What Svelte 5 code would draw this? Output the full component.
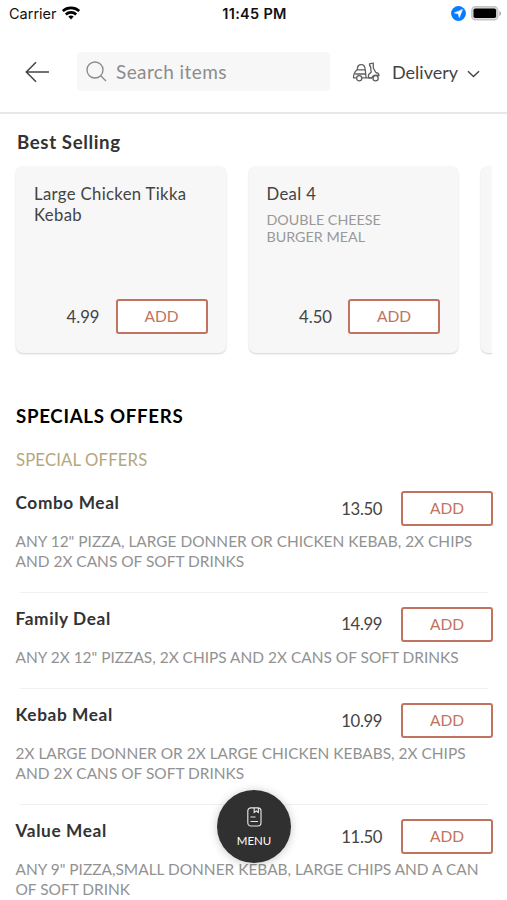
<script>
  const best = [
    { name: ['Large Chicken Tikka', 'Kebab'], desc: [], price: '4.99' },
    { name: ['Deal 4'], desc: ['DOUBLE CHEESE', 'BURGER MEAL'], price: '4.50' },
  ];
  const offers = [
    { name: 'Combo Meal', price: '13.50', desc: ['ANY 12" PIZZA, LARGE DONNER OR CHICKEN KEBAB, 2X CHIPS', 'AND 2X CANS OF SOFT DRINKS'] },
    { name: 'Family Deal', price: '14.99', desc: ['ANY 2X 12" PIZZAS, 2X CHIPS AND 2X CANS OF SOFT DRINKS'] },
    { name: 'Kebab Meal', price: '10.99', desc: ['2X LARGE DONNER OR 2X LARGE CHICKEN KEBABS, 2X CHIPS', 'AND 2X CANS OF SOFT DRINKS'] },
    { name: 'Value Meal', price: '11.50', desc: ['ANY 9" PIZZA,SMALL DONNER KEBAB, LARGE CHIPS AND A CAN', 'OF SOFT DRINK'] },
  ];
</script>

<div class="screen">
  <div class="status">
    <div class="carrier">
      <span>Carrier</span>
      <svg width="18" height="14" viewBox="0 0 18 14" fill="none" stroke="#000" stroke-width="2.6">
        <path d="M.8 5.100C5.300.8 12.700.8 17.200 5.100" />
        <path d="M3.800 8.500C6.600 5.700 11.400 5.700 14.200 8.500" />
        <path d="M6.300 10.600C7.800 9.100 10.200 9.100 11.700 10.600L9 13.400Z" fill="#000" stroke="none" />
      </svg>
    </div>
    <div class="time">11:45 PM</div>
    <div class="power">
      <svg width="15" height="15" viewBox="0 0 15 15"><circle cx="7.500" cy="7.500" r="7.400" fill="#087cff" /><path d="M11.500 3.500 8.300 11.600 7.300 7.800 3.400 6.900Z" fill="#fff" stroke="#fff" stroke-width=".6" stroke-linejoin="round" /></svg>
      <svg width="31" height="15" viewBox="0 0 31 15"><rect x=".8" y=".8" width="26" height="13" rx="3.600" fill="#dcdcdc" stroke="#c4c4c4" stroke-width="1.400" /><rect x="2.500" y="2.500" width="22.600" height="9.600" rx="1.800" /><path d="M28.300 5v5c1.200-.5 1.800-1.400 1.800-2.500S29.500 5.500 28.300 5Z" fill="#aaa" /></svg>
    </div>
  </div>

  <header>
    <svg class="back" width="25" height="22" viewBox="0 0 25 22" fill="none" stroke="#444" stroke-width="1.500"><path d="M24 11H1.300M11 1.200 1.300 11 11 20.800" /></svg>
    <div class="search">
      <svg width="21" height="21" viewBox="0 0 21 21" fill="none" stroke="#8b8b8b" stroke-width="1.350"><circle cx="9" cy="9" r="8" /><path d="m14.700 14.700 5.300 5.300" /></svg>
      <span>Search items</span>
    </div>
    <div class="delivery">
      <svg width="28" height="20" viewBox="0 0 28 20" fill="none" stroke="#606060" stroke-width="1.300" stroke-linejoin="round">
        <path d="M5.300 7.800C5.300 4 6.700 2.600 9.200 2.600S13.100 4 13.100 7.800ZM5 7.800C2.800 9.800 1.500 12.500 1.500 15.800H4.500M13.300 7.800 14 15.800M3.200 12H13.800M9.900 15.800H20" />
        <circle cx="7.200" cy="16.300" r="2.600" /><circle cx="23.600" cy="16.300" r="2.600" />
        <path d="M17.800 4.200 17.500 1.800 21.300 1.100V6L23.700 10.300c2.100.3 3.300 1.500 3.300 3.400-3.300-1.200-6.500-.4-7 2.100H16.500V12.800L19.200 10 18.500 4.200Z" />
      </svg>
      <span>Delivery</span>
      <svg class="chev" width="13" height="8" viewBox="0 0 13 8" fill="none" stroke="#444" stroke-width="1.400"><path d="m1 1.200 5.500 5.300L12 1.200" /></svg>
    </div>
  </header>

  <h2 class="best-title">Best Selling</h2>
  <div class="cards">
    {#each best as item}
      <article class="card">
        <div class="card-name">{#each item.name as line}<div>{line}</div>{/each}</div>
        <div class="card-desc">{#each item.desc as line}<div>{line}</div>{/each}</div>
        <div class="buy"><span class="price">{item.price}</span><button>ADD</button></div>
      </article>
    {/each}
    <article class="card"></article>
  </div>

  <h1>SPECIALS OFFERS</h1>
  <h3>SPECIAL OFFERS</h3>
  <div class="list">
    {#each offers as item}
      <article class="item">
        <div class="row">
          <h4>{item.name}</h4>
          <span class="price">{item.price}</span>
          <button>ADD</button>
        </div>
        <div class="desc">{#each item.desc as line}<div>{line}</div>{/each}</div>
      </article>
    {/each}
  </div>

  <div class="menu">
    <svg width="15" height="20" viewBox="0 0 15 20" fill="none" stroke="#e6e6e6" stroke-width="1.150"><rect x=".8" y=".8" width="13.200" height="18.200" rx="3.200" /><path d="M7.200 1v4.500L9.300 4l2.100 1.500V1M3.500 10h5M3.500 14.500h7.500" /></svg>
    <span>MENU</span>
  </div>
</div>

<style>
  :global(body) { background: #fff; }
  .screen {
    position: relative;
    width: 507px;
    height: 900px;
    overflow: hidden;
    background: #fff;
    color: #333;
    font-family: Lato, sans-serif;
    white-space: nowrap;
    display: flex;
    flex-direction: column;
  }
  h1, h2, h3, h4 { margin: 0; }
  svg { display: block; flex: none; }
  .status {
    flex: none;
    height: 28px;
    box-sizing: border-box;
    padding: 0 5px 0 9px;
    display: grid;
    grid-template-columns: 1fr auto 1fr;
    align-items: center;
    font: 14.500px/28px Inter, sans-serif;
    color: #111;
  }
  .carrier { display: flex; align-items: center; gap: 5px; }
  .carrier svg { margin-top: -2px; }
  .time { font-weight: 600; letter-spacing: .3px; margin-left: -2px; }
  .power { display: flex; justify-content: flex-end; align-items: center; gap: 5px; margin-top: -1px; }
  header {
    flex: none;
    height: 86px;
    box-sizing: border-box;
    border-bottom: 2px solid #e7e7e7;
    padding: 24px 27px 0 25px;
    display: flex;
    align-items: flex-start;
  }
  .back { margin-top: 9px; }
  .search {
    margin-left: 27px;
    width: 254px;
    height: 39px;
    box-sizing: border-box;
    border-radius: 4px;
    background: #f7f7f7;
    display: flex;
    align-items: center;
    padding-left: 9px;
    gap: 9px;
    font-size: 19px;
    letter-spacing: .4px;
    color: #8c8c8c;
  }
  .delivery {
    margin-left: 22px;
    height: 39px;
    display: flex;
    align-items: center;
    font-size: 18px;
    color: #444;
  }
  .delivery span { margin-left: 12px; width: 75px; }
  .chev { margin-top: 4px; }
  .best-title { margin: 15px 0 0 17px; font-size: 18.700px; line-height: 26px; height: 26px; font-weight: 700; letter-spacing: .6px; }
  .cards {
    flex: none;
    margin: 10px 15px 0 14px;
    padding: 1px 0 5px 2px;
    display: flex;
    gap: 23px;
    overflow: hidden;
  }
  .card {
    flex: none;
    width: 209.500px;
    height: 187px;
    box-sizing: border-box;
    border-radius: 7px;
    background: #f7f7f7;
    box-shadow: 0 1px 2px rgba(0, 0, 0, .18);
    padding: 18px 18px 19px;
    display: flex;
    flex-direction: column;
  }
  .card-name { font-size: 16.700px; line-height: 20.500px; letter-spacing: .35px; color: #444; }
  .card-desc { margin-top: 6px; font-size: 14.300px; line-height: 17.700px; color: #999; }
  .buy { margin-top: auto; display: flex; justify-content: flex-end; align-items: center; gap: 16px; }
  .price { font-size: 16.700px; color: #444; }
  button {
    width: 92px;
    height: 35px;
    box-sizing: border-box;
    border: 2px solid #c0735f;
    border-radius: 3px;
    background: #fff;
    padding: 0 0 1px;
    font: 15.500px Lato, sans-serif;
    color: #c0735f;
  }
  h1 { margin: 45px 0 0 16px; font-size: 18.700px; line-height: 26px; font-weight: 700; letter-spacing: .7px; color: #000; }
  h3 { margin: 19px 0 0 16px; font-size: 16.700px; line-height: 24px; font-weight: 400; letter-spacing: .15px; color: #b5a67e; }
  .list { padding: 4px 14px 0 15.500px; }
  .item { position: relative; padding: 15px 0 20.800px; }
  .item + .item::before { content: ''; position: absolute; top: 0; left: 4.500px; right: 5px; border-top: 1px solid #f0f0f0; }
  .row { display: flex; align-items: center; height: 35px; }
  .row .price { letter-spacing: -.4px; }
  h4 { flex: 1; margin-top: -11px; font-size: 17.300px; line-height: 24px; font-weight: 700; letter-spacing: .6px; }
  .row button { margin-left: 19px; }
  .desc { margin-top: 6px; font-size: 15.450px; line-height: 19.600px; color: #929292; }
  .menu {
    position: absolute;
    left: 217px;
    top: 790px;
    width: 74px;
    height: 73px;
    box-sizing: border-box;
    padding-top: 17px;
    border-radius: 50%;
    background: #303030;
    box-shadow: 0 1px 10px rgba(0, 0, 0, .22);
    display: flex;
    flex-direction: column;
    align-items: center;
    gap: 6px;
    color: #fff;
    font-size: 11.500px;
    line-height: 15px;
  }
</style>
